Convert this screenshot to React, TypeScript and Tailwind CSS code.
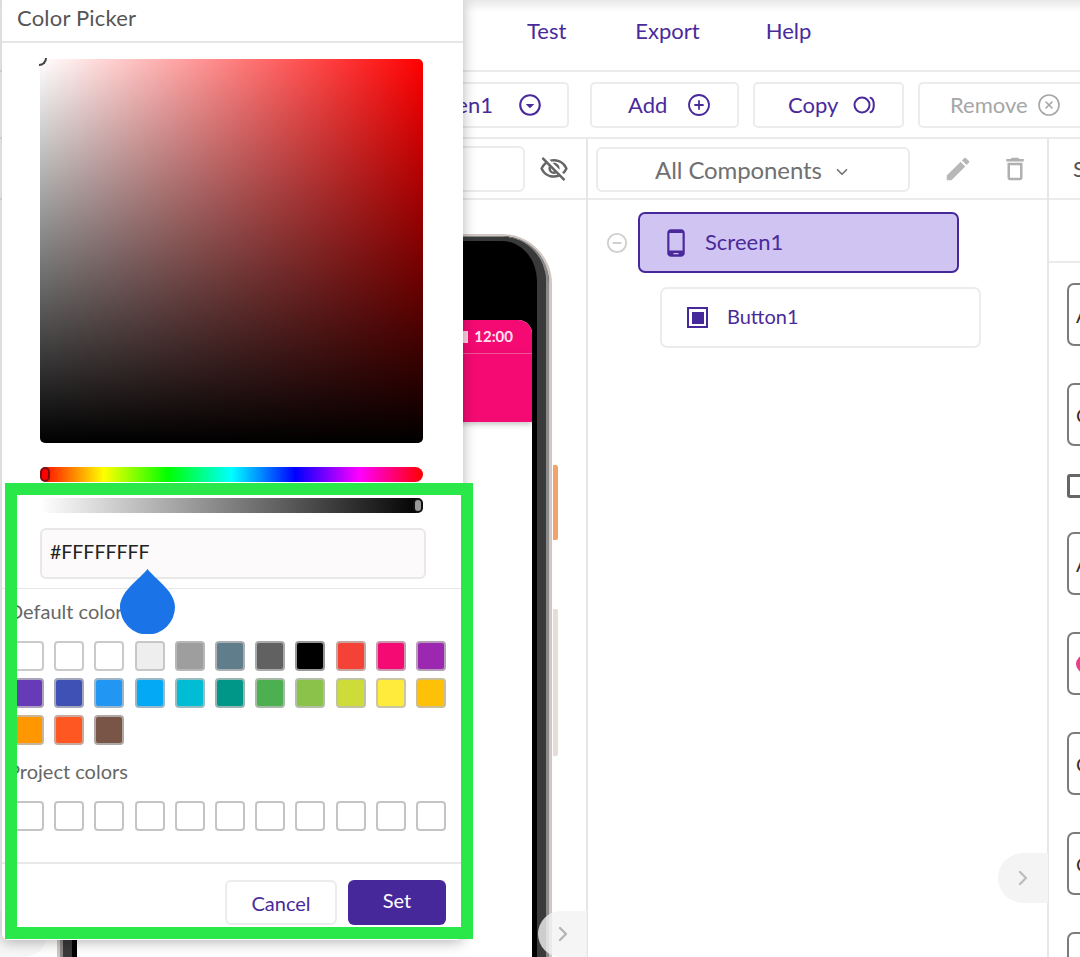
import { ChevronDown, ChevronRight, CirclePlus, CircleX, CircleMinus } from "lucide-react";
import {
  MdOutlineVisibilityOff,
  MdEdit,
  MdOutlineDelete,
  MdPhoneAndroid,
  MdOutlineArrowDropDownCircle,
} from "react-icons/md";

const PURPLE = "text-[#4a2a9a]";

const defaultColors = [
  "#ffffff", "#ffffff", "#ffffff", "#eeeeee", "#9e9e9e", "#607d8b", "#616161", "#000000", "#f44336", "#f50a74", "#9c27b0",
  "#673ab7", "#3f51b5", "#2196f3", "#03a9f4", "#00bcd4", "#009688", "#4caf50", "#8bc34a", "#cddc39", "#ffeb3b", "#ffc107",
  "#ff9800", "#ff5722", "#795548",
];

function CopyIcon() {
  return (
    <svg width="26" height="20" viewBox="0 0 26 20" fill="none" stroke="#4a2a9a" strokeWidth="2">
      <circle cx="9" cy="10" r="7.5" />
      <path d="M17.5 2.8c4.4 1.4 4.4 13 0 14.4" strokeLinecap="round" />
    </svg>
  );
}

function ToolbarButton({ label, icon, muted, className }: { label: string; icon: React.ReactNode; muted?: boolean; className: string }) {
  return (
    <div className={`flex h-[46px] shrink-0 items-center rounded-[5px] border-2 border-[#ececec] text-[22px] ${muted ? "text-[#a6a6a6]" : PURPLE} ${className}`}>
      <span>{label}</span>
      {icon}
    </div>
  );
}

function Field({ children }: { children?: React.ReactNode }) {
  return (
    <div className="mb-[37px] flex h-[63px] w-[120px] shrink-0 items-center rounded-[7px] border-2 border-[#7b7b7b] pl-[7px] text-[20px] text-[#333]">
      {children}
    </div>
  );
}

function Phone() {
  return (
    <div className="relative h-[760px] w-[495px] rounded-t-[50px] border-x-[3px] border-t-2 border-[#d0c6c2] bg-black">
      <div className="h-full rounded-t-[47px] border-x-[3px] border-t border-[#8a8a8a]">
        <div className="h-full rounded-t-[44px] border-x-[9px] border-t-[4px] border-[#3a3a3a] px-[5px] pt-[79px]">
          <div className="h-full overflow-hidden rounded-t-[14px] bg-white">
            <div className="flex h-[34px] items-center justify-end border-b border-[#ff5aa5] bg-[#f50a74] pr-[19px] text-[15px] font-bold text-[#ffe3ef]">
              <span className="mr-[6px] h-[12px] w-[7px] bg-[#ffd3e6]" />
              12:00
            </div>
            <div className="h-[68px] bg-[#f50a74] shadow-[0_2px_6px_rgba(0,0,0,0.25)]" />
          </div>
        </div>
      </div>
      <div className="absolute right-[-9px] top-[229px] h-[75px] w-[5px] rounded-r-[2px] bg-[#f2a36c]" />
      <div className="absolute right-[-9px] top-[373px] h-[147px] w-[5px] rounded-r-[2px] bg-[#e6dcd8]" />
    </div>
  );
}

function ColorPicker() {
  return (
    <div className="absolute left-[2px] top-0 flex h-[940px] w-[461px] flex-col rounded-b-[6px] bg-white shadow-[0_2px_14px_rgba(0,0,0,0.3)]">
      <div className="flex h-[43px] shrink-0 items-center border-b-2 border-[#e6e6e6] pb-[6px] pl-[15px] text-[22px] tracking-[0.2px] text-[#555]">
        Color Picker
      </div>
      <div className="relative ml-[38px] mt-[16px] h-[384px] w-[383px] shrink-0 rounded-[5px] bg-[linear-gradient(to_top,#000,transparent),linear-gradient(to_right,#fff,#f00)]">
        <div className="absolute left-[-1px] top-[-1px] h-[8px] w-[8px] rounded-br-full border-b-2 border-r-2 border-[#444]" />
      </div>
      <div className="relative ml-[38px] mt-[24px] h-[15px] w-[383px] shrink-0 rounded-full bg-[linear-gradient(to_right,#f00,#ff0,#0f0,#0ff,#00f,#f0f,#f00)]">
        <div className="absolute left-0 top-0 h-[15px] w-[10px] rounded-full border-2 border-[#7a1010] bg-[#f00]" />
      </div>
      <div className="relative ml-[38px] mt-[16px] h-[15px] w-[383px] shrink-0 rounded-full bg-[linear-gradient(to_right,transparent,#000)]">
        <div className="absolute right-0 top-0 h-[15px] w-[10px] rounded-full border-2 border-[#111] bg-[#999]" />
      </div>
      <div className="ml-[38px] mt-[15px] flex h-[51px] w-[386px] shrink-0 items-center rounded-[6px] border-2 border-[#e9e7e8] bg-[#fcfafb] pb-[3px] pl-[8px] text-[19.5px] text-[#222]">
        #FFFFFFFF
      </div>
      <div className="mt-[9px] shrink-0 border-t border-[#e6e6e6]" />
      <div className="ml-[6px] mt-[9px] h-[26px] shrink-0 text-[20px] leading-[26px] text-[#666]">Default colors</div>
      <div className="ml-[12px] mt-[17px] grid shrink-0 grid-cols-[repeat(11,30px)] gap-x-[10.2px] gap-y-[7px]">
        {defaultColors.map((color, i) => (
          <div key={i} className="h-[30px] rounded-[4px] border-2 border-[#bdbdbd]/80" style={{ backgroundColor: color }} />
        ))}
      </div>
      <div className="ml-[6px] mt-[13px] h-[26px] shrink-0 text-[20px] leading-[26px] text-[#666]">Project colors</div>
      <div className="ml-[12px] mt-[17px] grid shrink-0 grid-cols-[repeat(11,30px)] gap-x-[10.2px]">
        {Array.from({ length: 11 }).map((_, i) => (
          <div key={i} className="h-[30px] rounded-[4px] border-2 border-[#c4c4c4]" />
        ))}
      </div>
      <div className="mt-[31px] shrink-0 border-t-2 border-[#e8e8e8]" />
      <div className="mr-[17px] mt-[16px] flex justify-end gap-[11px]">
        <div className={`flex h-[45px] w-[112px] items-center justify-center rounded-[6px] border-2 border-[#ececec] text-[20px] ${PURPLE}`}>
          Cancel
        </div>
        <div className="flex h-[45px] w-[98px] items-center justify-center rounded-[6px] bg-[#47289b] pb-[5px] text-[20px] text-white">
          Set
        </div>
      </div>
    </div>
  );
}

export default function App() {
  return (
    <div className="relative h-[957px] w-[1080px] overflow-hidden bg-white font-['Lato',sans-serif]">
      <div className="absolute inset-x-0 top-0 h-[12px] bg-gradient-to-b from-[#e9e9e9] to-white" />

      <div className={`relative flex h-[72px] items-center gap-[69px] border-b-2 border-[#ebebeb] pb-[10px] pl-[527px] text-[22px] ${PURPLE}`}>
        <span>Test</span>
        <span>Export</span>
        <span className="ml-[-3px]">Help</span>
      </div>

      <div className="ml-[340px] flex h-[65px] items-center gap-[14px] overflow-visible">
        <ToolbarButton
          label="Screen1"
          icon={<MdOutlineArrowDropDownCircle size={26} className="ml-[24px]" />}
          className="mr-[7px] w-[229px] justify-end pr-[24px]"
        />
        <ToolbarButton
          label="Add"
          icon={<CirclePlus size={24} strokeWidth={1.8} className="ml-[20px]" />}
          className="w-[149px] pl-[36px]"
        />
        <ToolbarButton
          label="Copy"
          icon={<span className="ml-[15px] flex"><CopyIcon /></span>}
          className="w-[151px] pl-[33px]"
        />
        <ToolbarButton
          label="Remove"
          icon={<CircleX size={24} strokeWidth={1.6} className="ml-[9px]" />}
          muted
          className="w-[170px] pl-[30px]"
        />
      </div>

      <div className="flex h-[820px] border-t-2 border-[#ebebeb]">
        <div className="w-[588px] shrink-0 border-r-2 border-[#e6e6e6]">
          <div className="flex h-[61px] items-center gap-[14px] border-b-2 border-[#ebebeb] pl-[300px]">
            <div className="h-[46px] w-[225px] rounded-[6px] border-2 border-[#ececec]" />
            <MdOutlineVisibilityOff size={30} className="text-[#666]" />
          </div>
          <div className="pl-[57px] pt-[34px]">
            <Phone />
          </div>
        </div>

        <div className="w-[461px] shrink-0 border-r-2 border-[#e6e6e6]">
          <div className="flex h-[61px] items-center border-b-2 border-[#ebebeb] pl-[8px]">
            <div className="mt-[1px] flex h-[45px] w-[314px] items-center justify-center gap-[11px] rounded-[6px] border-2 border-[#ececec] pt-[2px] text-[24px] tracking-[-0.1px] text-[#707070]">
              All Components
              <ChevronDown size={18} strokeWidth={2.2} className="mt-[3px]" />
            </div>
            <MdEdit size={30} className="ml-[33px] text-[#b8b8b8]" />
            <MdOutlineDelete size={30} className="ml-[27px] text-[#b0b0b0]" />
          </div>
          <div className="ml-[18px] mt-[12px] flex items-center gap-[10px]">
            <CircleMinus size={22} strokeWidth={2} className="text-[#cfcfcf]" />
            <div className={`flex h-[61px] w-[321px] items-center gap-[14px] rounded-[7px] border-2 border-[#47289b] bg-[#d0c4f2] pb-[3px] pl-[20px] text-[22px] ${PURPLE}`}>
              <MdPhoneAndroid size={30} className="ml-[1px] mt-[3px]" />
              Screen1
            </div>
          </div>
          <div className={`ml-[72px] mt-[14px] flex h-[61px] w-[321px] items-center gap-[19px] rounded-[7px] border-2 border-[#ececec] pb-[3px] pl-[25px] text-[20px] ${PURPLE}`}>
            <div className="mt-[3px] flex h-[21px] w-[21px] items-center justify-center border-2 border-[#47289b]">
              <div className="h-[12px] w-[12px] bg-[#47289b]" />
            </div>
            Button1
          </div>
        </div>

        <div className="min-w-0 flex-1">
          <div className="flex h-[61px] items-center border-b-2 border-[#ebebeb] pl-[24px] text-[22px] text-[#555]">S</div>
          <div className="h-[63px] border-b-2 border-[#ebebeb]" />
          <div className="flex flex-col pl-[18px] pt-[20px]">
            <Field>A</Field>
            <div className="mb-[-9px]"><Field>C</Field></div>
            <div className="mb-[34px] h-[24px] w-[30px] rounded-[3px] border-[3px] border-[#666]" />
            <Field>A</Field>
            <Field>
              <span className="h-[18px] w-[18px] rounded-full bg-[#e9408a]" />
            </Field>
            <Field>C</Field>
            <Field>C</Field>
            <Field />
          </div>
        </div>
      </div>

      <div className="absolute left-0 top-[911px] h-[46px] w-[47px] rounded-r-full bg-[#f7f7f7]" />

      <ColorPicker />

      <div className="absolute left-[5px] top-[483px] h-[456px] w-[468px] border-[12px] border-[#2be84a]" />

      <svg className="absolute left-[120px] top-[569px]" width="55" height="65" viewBox="0 0 55 65">
        <path d="M27.5 0C20 10 0 22 0 38a27.5 27.5 0 0 0 55 0C55 22 35 10 27.5 0Z" fill="#1b73e8" />
      </svg>

      <div className="absolute left-[998px] top-[853px] flex h-[50px] w-[50px] items-center justify-center rounded-l-full bg-[#f4f4f4] text-[#bdbdbd]">
        <ChevronRight size={24} strokeWidth={2.4} />
      </div>
      <div className="absolute left-[538px] top-[911px] flex h-[46px] w-[49px] items-center justify-center rounded-l-full bg-[#f2f2f2]/80 text-[#b5b5b5]">
        <ChevronRight size={24} strokeWidth={2.4} />
      </div>
    </div>
  );
}
